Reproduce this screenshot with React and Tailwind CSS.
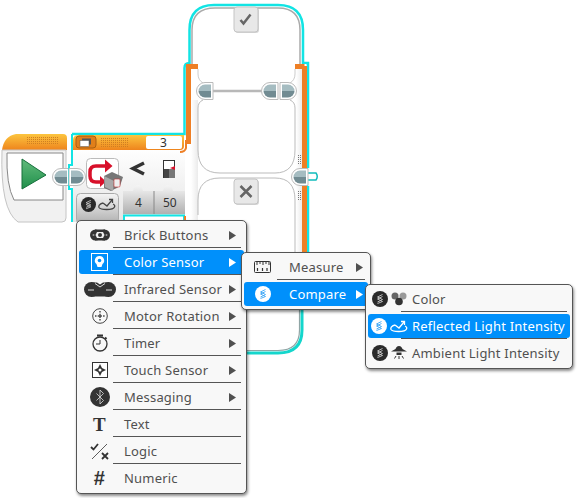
const FONT = "font-['Noto_Sans',sans-serif]";

const Arrow = () => (
  <svg width="7" height="9" viewBox="0 0 7 9" className="fill-current">
    <path d="M0 0l7 4.5L0 9z" />
  </svg>
);

const CompareDisc = ({ active, size = 16 }) => (
  <svg width={size} height={size} viewBox="0 0 16 16">
    <circle cx="8" cy="8" r="8" fill={active ? "#fff" : "#2a2a2a"} />
    <path
      d="M10.500 3.500L5.500 6l5 2.500-5 2.500M10.500 5.500L5.500 8l5 2.500-5 2"
      fill="none"
      stroke={active ? "#3aa5f5" : "#ccc"}
      strokeWidth="0.900"
    />
  </svg>
);

const icons = {
  brick: (
    <svg width="20" height="14" viewBox="0 0 20 14">
      <circle cx="5.500" cy="7" r="5.500" fill="#333" />
      <circle cx="14.500" cy="7" r="5.500" fill="#333" />
      <rect x="5" y="1.500" width="10" height="11" fill="#333" />
      <path d="M7 4h6l1.500 3L13 10H7L5.500 7z" fill="#eee" />
      <circle cx="10" cy="7" r="2" fill="#333" />
      <circle cx="3.500" cy="7" r="1" fill="#999" />
      <circle cx="16.500" cy="7" r="1" fill="#999" />
    </svg>
  ),
  color: (
    <svg width="17" height="18" viewBox="0 0 17 18">
      <rect x="0.500" y="0.500" width="16" height="17" fill="none" stroke="#fff" />
      <path d="M8.500 3a4.500 4.500 0 0 1 3 8l-1 3h-4l-1-3a4.500 4.500 0 0 1 3-8z" fill="#fff" />
      <circle cx="8.500" cy="7.500" r="1.800" fill="#0090fb" />
    </svg>
  ),
  infrared: (
    <svg width="32" height="15" viewBox="0 0 32 15">
      <circle cx="7.500" cy="7.500" r="7.500" fill="#333" />
      <circle cx="24.500" cy="7.500" r="7.500" fill="#333" />
      <path d="M7 0.500h6l3 2 3-2h6v14H7z" fill="#333" />
      <path d="M4 8h6M22 8h6M11 1.500l5 3.500 5-3.500" stroke="#ddd" fill="none" />
    </svg>
  ),
  motor: (
    <svg width="16" height="16" viewBox="0 0 16 16" fill="none" stroke="#444">
      <circle cx="8" cy="8" r="7.300" />
      <path d="M8 3v10M3 8h10" strokeDasharray="1.500 1.200" strokeWidth="1.400" />
      <circle cx="8" cy="8" r="1" fill="#444" stroke="none" />
    </svg>
  ),
  timer: (
    <svg width="16" height="18" viewBox="0 0 16 18" fill="none" stroke="#333">
      <circle cx="8" cy="10" r="7" strokeWidth="1.300" />
      <path d="M8 6v4H4" />
      <path d="M5 1.500h6M13 3.500l1.500 1.500" strokeWidth="2" />
    </svg>
  ),
  touch: (
    <svg width="16" height="16" viewBox="0 0 16 16">
      <rect x="0.500" y="0.500" width="15" height="15" fill="#fff" stroke="#333" />
      <path d="M8 2l2 4 4 2-4 2-2 4-2-4-4-2 4-2z" fill="#333" />
      <circle cx="8" cy="8" r="1.500" fill="#fff" />
    </svg>
  ),
  messaging: (
    <svg width="20" height="20" viewBox="0 0 20 20">
      <circle cx="10" cy="10" r="10" fill="#333" />
      <path d="M6.500 6.500l7 7-3.500 3.500V3l3.500 3.500-7 7" fill="none" stroke="#ddd" strokeWidth="0.800" />
    </svg>
  ),
  logic: (
    <svg width="20" height="18" viewBox="0 0 20 18" fill="none" stroke="#333">
      <path d="M1 5l2.500 2.500L8 2" strokeWidth="1.800" />
      <path d="M2 17L17 2" strokeWidth="0.800" />
      <path d="M12 11l6 6M18 11l-6 6" strokeWidth="1.800" />
    </svg>
  ),
};

const ruler = (
  <svg width="17" height="12" viewBox="0 0 17 12" fill="none" stroke="#333">
    <rect x="0.500" y="0.500" width="16" height="11" rx="1" />
    <path d="M3 1v3M6 1v2M9 1v3M12 1v2M15 1v3" />
    <path d="M3.500 7v3M8.500 7v3M13 7v3" strokeWidth="1.200" />
  </svg>
);

const drops = (
  <svg width="16" height="14" viewBox="0 0 16 14">
    <circle cx="4" cy="4" r="3.500" fill="#666" />
    <circle cx="12" cy="4" r="3.500" fill="#999" />
    <circle cx="8" cy="9.500" r="3.800" fill="#333" />
  </svg>
);

const reflected = (color) => (
  <svg width="18" height="13" viewBox="0 0 18 13" fill="none" stroke={color} strokeWidth="1.300">
    <path d="M5 5C1 6 .5 8 1 9.500 2.500 12 15 12.500 16.500 9 17 8 16.500 6.500 15 6" />
    <path d="M5 5l4 3 5-6" />
    <path d="M11 1.500h3.500V5" />
  </svg>
);

const lamp = (
  <svg width="16" height="14" viewBox="0 0 16 14" fill="#333">
    <path d="M8 0c-2 0-3 1.500-3.500 3L0 5.500h16L11.500 3C11 1.500 10 0 8 0z" />
    <rect x="5.500" y="6.500" width="5" height="2.500" />
    <path d="M8 10v3M5 10l-1.500 2.500M11 10l1.500 2.500" stroke="#333" fill="none" />
  </svg>
);

const mainItems = [
  { label: "Brick Buttons", icon: icons.brick, sub: true },
  { label: "Color Sensor", icon: icons.color, sub: true, active: true },
  { label: "Infrared Sensor", icon: icons.infrared, sub: true },
  { label: "Motor Rotation", icon: icons.motor, sub: true },
  { label: "Timer", icon: icons.timer, sub: true },
  { label: "Touch Sensor", icon: icons.touch, sub: true },
  { label: "Messaging", icon: icons.messaging, sub: true },
  {
    label: "Text",
    icon: <span className="font-['Liberation_Serif',serif] text-[19px] font-bold leading-none text-[#333]">T</span>,
  },
  { label: "Logic", icon: icons.logic },
  {
    label: "Numeric",
    icon: <span className="font-['Liberation_Sans',sans-serif] text-[20px] font-bold leading-none text-[#333]">#</span>,
  },
];

const colorItems = [
  { label: "Measure", icon: ruler, sub: true },
  { label: "Compare", icon: <CompareDisc active />, sub: true, active: true },
];

const compareItems = [
  {
    label: "Color",
    icon: (
      <span className="flex items-center gap-[3px]">
        <CompareDisc />
        {drops}
      </span>
    ),
  },
  {
    label: "Reflected Light Intensity",
    active: true,
    icon: (
      <span className="flex items-center gap-[3px]">
        <CompareDisc active />
        {reflected("#fff")}
      </span>
    ),
  },
  {
    label: "Ambient Light Intensity",
    icon: (
      <span className="flex items-center gap-[3px]">
        <CompareDisc />
        {lamp}
      </span>
    ),
  },
];

const MenuRow = ({ item, iconWidth, textGap, lineLeft, arrowGap, isLast }) => (
  <div className="relative h-[27px]">
    <div
      className={`absolute inset-x-0 top-[1px] flex h-[24px] items-center rounded-[3px] ${
        item.active ? "bg-[#0090fb] text-white" : "text-[#505050]"
      }`}
    >
      <div
        className="flex shrink-0 items-center justify-center"
        style={{ width: iconWidth, marginRight: textGap }}
      >
        {item.icon}
      </div>
      <span className="flex-1 whitespace-nowrap pt-[2px]">{item.label}</span>
      {item.sub && (
        <span style={{ marginRight: arrowGap }}>
          <Arrow />
        </span>
      )}
    </div>
    {!isLast && (
      <div className="absolute bottom-[1px] right-[3px] h-px bg-[#555]" style={{ left: lineLeft }} />
    )}
  </div>
);

const Menu = ({ className, items, iconWidth, textGap, lineLeft, arrowGap = 8 }) => (
  <div
    className={`absolute z-10 rounded-[5px] border border-[#555] bg-[#f8f8f8] px-[2px] py-[1px] text-[13px] tracking-[0.2px] shadow-[1px_2px_3px_rgba(0,0,0,0.45)] ${FONT} ${className}`}
  >
    {items.map((item, i) => (
      <MenuRow
        key={item.label}
        item={item}
        iconWidth={iconWidth}
        textGap={textGap}
        lineLeft={lineLeft}
        arrowGap={arrowGap}
        isLast={i === items.length - 1}
      />
    ))}
  </div>
);

const Plug = ({ dir, x, y }) => (
  <g transform={`translate(${x} ${y})`}>
    {dir === "left" ? (
      <>
        <path d="M8 -8.500H16V8.500H8A8.500 8.500 0 0 1 8 -8.500z" fill="#fff" stroke="#bbb" />
        <path d="M8 -6.500H14V0H1.500A6.500 6.500 0 0 1 8 -6.500z" fill="#a5bcc1" />
        <path d="M1.500 0H14V6.500H8A6.500 6.500 0 0 1 1.500 0z" fill="#718b92" />
      </>
    ) : (
      <>
        <path d="M0 -8.500H8A8.500 8.500 0 0 1 8 8.500H0z" fill="#fff" stroke="#bbb" />
        <path d="M2 -6.500H8A6.500 6.500 0 0 1 14.500 0H2z" fill="#a5bcc1" />
        <path d="M2 0H14.500A6.500 6.500 0 0 1 8 6.500H2z" fill="#718b92" />
      </>
    )}
  </g>
);

const Dots = ({ x, y, cols, rows, fill }) => {
  const out = [];
  for (let r = 0; r < rows; r++) {
    for (let c = 0; c < cols; c++) {
      out.push(<rect key={`${r}-${c}`} x={x + c * 2} y={y + r * 2} width="1" height="1" fill={fill} />);
    }
  }
  return <>{out}</>;
};

// the program blocks and the switch frame
const Diagram = () => (
  <svg width="578" height="498" viewBox="0 0 578 498" className="absolute left-0 top-0">
    <defs>
      <linearGradient id="head" x1="0" y1="0" x2="0" y2="1">
        <stop offset="0" stopColor="#fcc53f" />
        <stop offset="1" stopColor="#ee841d" />
      </linearGradient>
      <linearGradient id="panel" x1="0" y1="0" x2="0" y2="1">
        <stop offset="0" stopColor="#fff" />
        <stop offset="1" stopColor="#e4e4e4" />
      </linearGradient>
      <linearGradient id="side" x1="0" y1="0" x2="1" y2="0">
        <stop offset="0" stopColor="#fff" />
        <stop offset="1" stopColor="#ebebeb" />
      </linearGradient>
      <linearGradient id="param" x1="0" y1="0" x2="0" y2="1">
        <stop offset="0" stopColor="#f5f5f5" />
        <stop offset="1" stopColor="#b0b0b0" />
      </linearGradient>
      <linearGradient id="tri" x1="0" y1="0" x2="0" y2="1">
        <stop offset="0" stopColor="#62bb7c" />
        <stop offset="1" stopColor="#1f8f4a" />
      </linearGradient>
    </defs>

    {/* switch frame */}
    <path
      d="M72 134H184.500V68Q184.500 63 189.500 63V30Q189.500 5 214 5H278Q303 5 303 30V63H308V168"
      fill="none"
      stroke="#12e4e4"
      strokeWidth="2.500"
    />
    <path d="M308 186V290" stroke="#12e4e4" strokeWidth="2.500" />
    <path d="M302 310V330Q302 353 278 353H215" fill="none" stroke="#14d6cc" strokeWidth="3" />

    <path d="M192 64V30Q192 8 215 8H278Q300 8 300 30V64z" fill="#fff" />
    <path d="M187 64H306V300H187z" fill="#fff" />
    <path d="M191 100H198V222H191z" fill="url(#side)" />
    <path d="M296 68H302V310H296z" fill="url(#side)" />

    <path d="M304.500 66V300" stroke="#ee7f25" strokeWidth="5" />
    <path d="M295 66.500H304.500" stroke="#ee7f25" strokeWidth="5" />
    <path d="M188.500 66V144" stroke="#ee7f25" strokeWidth="5" />
    <path d="M186 66.500H198" stroke="#ee7f25" strokeWidth="5" />

    {/* upper case */}
    <path d="M192 64V30Q192 8 215 8H278Q300 8 300 30V64" fill="none" stroke="#aaa" strokeWidth="1.500" />
    <path d="M198 69V74Q198 80 203 83M295 69V74Q295 80 290 83" fill="none" stroke="#ccc" />
    <path d="M205 91H275" stroke="#b8b8b8" strokeWidth="2.500" />
    <path
      d="M203 100Q198 102 198 108V150Q198 173 220 173H275Q295 173 295 150V108Q295 102 290 100"
      fill="#fff"
      stroke="#bbb"
    />
    {/* lower case */}
    <path d="M198 215V200Q198 178 220 178H275Q295 178 295 200V215" fill="#fff" stroke="#bbb" />
    <path d="M295 215V300" stroke="#bbb" />
    <path d="M299.500 310V330Q299.500 350.500 278 350.500H215" fill="none" stroke="#8fa5a5" strokeWidth="1.200" />
    <Dots x={298} y={155} cols={2} rows={5} fill="#777" />
    <Dots x={298} y={191} cols={2} rows={5} fill="#777" />

    {/* case tabs */}
    <rect x="235" y="8" width="24" height="25" rx="3" fill="#777" opacity="0.300" />
    <rect x="234" y="7" width="24" height="25" rx="3" fill="#e8e8e8" stroke="#c4c4c4" />
    <path d="M240.500 20l3 3.500 7-9" fill="none" stroke="#666" strokeWidth="2.500" />
    <rect x="235" y="180" width="24" height="25" rx="3" fill="#777" opacity="0.300" />
    <rect x="234" y="179" width="24" height="25" rx="3" fill="#e8e8e8" stroke="#c4c4c4" />
    <path d="M240.500 186l11 11M251.500 186l-11 11" stroke="#666" strokeWidth="2.500" />

    {/* case plugs */}
    <Plug dir="left" x={197} y={91} />
    <Plug dir="left" x={262} y={91} />
    <Plug dir="right" x={280} y={91} />
    <path d="M304 173H316Q318.500 176.500 316 180H304" fill="#fff" stroke="#12bcbc" strokeWidth="1.500" />
    <Plug dir="left" x={292} y={177} />

    {/* start block */}
    <path d="M67 150V138Q67 134 63 134H16Q4 136 2 150z" fill="url(#head)" />
    <Dots x={27} y={137} cols={16} rows={4} fill="#cf7f22" />
    <path d="M2 150H66V218Q66 222 62 222H18Q0 210 2 150z" fill="#f1f1f1" stroke="#c4c4c4" />
    <path d="M7 153H63V200H14Q6 185 7 153z" fill="#fff" stroke="#888" />
    <path d="M22 159L46 175 22 189z" fill="url(#tri)" stroke="#16703b" />
    <Plug dir="left" x={53} y={177} />

    {/* sensor block */}
    <rect x="73" y="148" width="112" height="74" fill="url(#panel)" />
    <path d="M73 140Q73 135 79 135H184V146Q184 150 180 150H73z" fill="url(#head)" />
    <path d="M186 140V148Q185 152 180 152" fill="none" stroke="#ee7f25" strokeWidth="2" />
    <path d="M72 134V165H69V189H72V222" fill="none" stroke="#12e4e4" strokeWidth="2" />
    <rect x="146" y="136" width="36" height="13" rx="2" fill="#fff" />
    <rect x="76" y="136" width="20" height="12" rx="3" fill="#e07f1a" stroke="#a85f10" />
    <rect x="82" y="138.500" width="9" height="6" fill="#555" />
    <rect x="80" y="140.500" width="9" height="6" fill="#fff" stroke="#555" strokeWidth="0.500" />
    <Dots x={101} y={138} cols={14} rows={5} fill="#cf7f22" />
    <Plug dir="right" x={69} y={177} />

    {/* sensor icon button */}
    <rect x="86.500" y="158.500" width="32" height="30" rx="4" fill="#fff" stroke="#bbb" />
    <path d="M106 166H96Q90 166 90 172V176Q90 182 96 182H101" fill="none" stroke="#d8102a" strokeWidth="3.500" />
    <path d="M105 159.500l7.500 6.500-7.500 6.500z" fill="#d8102a" />
    <path d="M100 176l6 5.500-6 5.500z" fill="#d8102a" />
    <path d="M104 176l8-4 11 5-3 9-9 5-7-3z" fill="#777" />
    <path d="M104 176l10 5-1 10-8-4z" fill="#a8a8a8" />
    <rect x="114" y="179" width="6" height="8" rx="1" fill="#eee" stroke="#c33" strokeWidth="0.600" />

    {/* compare glyph */}
    <path d="M144 163L133 168.500 144 174" fill="none" stroke="#333" strokeWidth="3.500" />
    <rect x="163.500" y="160.500" width="11" height="17" fill="#fff" stroke="#333" />
    <rect x="164" y="169" width="10.500" height="9" fill="#444" />
    <rect x="169" y="169" width="6" height="9" fill="#777" />
    <path d="M170 168l5-2v4z" fill="#d8102a" />

    {/* mode selector */}
    <rect x="76.500" y="193.500" width="42" height="30" rx="4" fill="url(#param)" stroke="#aaa" />

    {/* params */}
    <path
      d="M123 191H133Q134 185 138 185 142 185 143 191H163Q164 185 168 185 172 185 173 191H185V214H123z"
      fill="url(#param)"
    />
    <path d="M154 191V214" stroke="#888" />
    <rect x="124" y="215.500" width="60" height="8" fill="#fff" stroke="#12e4e4" strokeWidth="2" />
    <rect x="184" y="216" width="2" height="5" fill="#ee7f25" />
  </svg>
);

const Label = ({ className, children }) => (
  <span className={`absolute z-[1] text-[12px] leading-none text-[#333] ${FONT} ${className}`}>{children}</span>
);

export default function App() {
  return (
    <div className="relative h-[498px] w-[578px] overflow-hidden bg-white">
      <Diagram />

      {/* block values */}
      <Label className="left-[160px] top-[137px]">3</Label>
      <Label className="left-[135px] top-[197px]">4</Label>
      <Label className="left-[163px] top-[197px]">50</Label>

      {/* mode icons */}
      <div className="absolute left-[81px] top-[197px] z-[1] flex items-center gap-[2px]">
        <CompareDisc size={15} />
        {reflected("#444")}
      </div>

      <Menu
        className="left-[76px] top-[220px] w-[171px]"
        items={mainItems}
        iconWidth={41}
        textGap={4}
        lineLeft={34}
      />
      <Menu
        className="left-[241px] top-[252px] w-[130px]"
        items={colorItems}
        iconWidth={37}
        textGap={8}
        lineLeft={33}
        arrowGap={5}
      />
      <Menu
        className="left-[365px] top-[284px] w-[208px]"
        items={compareItems}
        iconWidth={43}
        textGap={1}
        lineLeft={33}
      />
    </div>
  );
}
